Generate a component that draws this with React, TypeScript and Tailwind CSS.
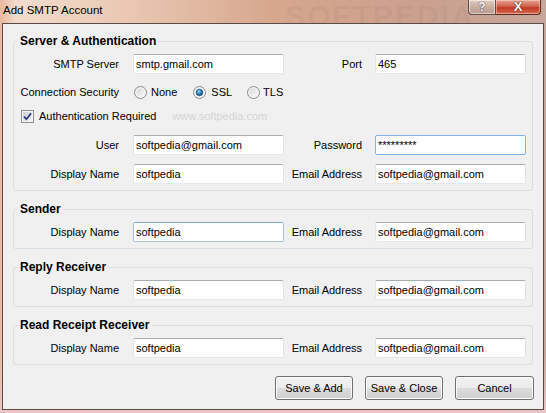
import { ReactNode } from 'react'

const inputBase =
  'h-[20px] w-[151px] bg-white border px-[2px] text-[11px] leading-[18px] text-black whitespace-nowrap overflow-hidden'

function TextBox({ value, state }: { value: string; state?: 'focus' | 'hover' }) {
  const border =
    state === 'focus'
      ? 'border-[#7eb4ea]'
      : state === 'hover'
        ? 'border-[#a9c2db] border-t-[#8aa9c8]'
        : 'border-[#e2e3ea] border-t-[#abadb3] border-b-[#e3e9ef]'
  return <div className={`${inputBase} ${border} rounded-[2px]`}>{value}</div>
}

function Label({ children, w }: { children: ReactNode; w: string }) {
  return <div className={`${w} shrink-0 text-right text-[11px] leading-[14px] text-black`}>{children}</div>
}

interface RowProps {
  label1: string
  value1: string
  label2: string
  value2: string
  state1?: 'focus' | 'hover'
  state2?: 'focus' | 'hover'
  className?: string
}

function FieldRow({ label1, value1, label2, value2, state1, state2, className = '' }: RowProps) {
  return (
    <div className={`flex items-center h-[20px] ${className}`}>
      <Label w="w-[105px]">{label1}</Label>
      <div className="ml-[14px]">
        <TextBox value={value1} state={state1} />
      </div>
      <Label w="w-[78px]">{label2}</Label>
      <div className="ml-[13px]">
        <TextBox value={value2} state={state2} />
      </div>
    </div>
  )
}

function Group({ title, children, className = '' }: { title: string; children: ReactNode; className?: string }) {
  return (
    <fieldset className={`border border-[#d5dfe5] rounded-[3px] p-0 m-0 ${className}`}>
      <legend className="ml-[4px] px-[2px] text-[12px] leading-[14px] font-bold text-black">{title}</legend>
      <div className="pt-[6px] pb-[6px]">{children}</div>
    </fieldset>
  )
}

function Radio({ checked }: { checked?: boolean }) {
  return (
    <svg width="13" height="13" viewBox="0 0 13 13" className="shrink-0">
      <defs>
        <linearGradient id="radioFill" x1="0" y1="0" x2="1" y2="1">
          <stop offset="0" stopColor="#d6d6d6" />
          <stop offset="1" stopColor="#fbfbfb" />
        </linearGradient>
        <radialGradient id="radioDot" cx="0.4" cy="0.35" r="0.7">
          <stop offset="0" stopColor="#8fd6ff" />
          <stop offset="0.5" stopColor="#2e86c7" />
          <stop offset="1" stopColor="#0b3e6e" />
        </radialGradient>
      </defs>
      <circle cx="6.5" cy="6.5" r="6" fill="#f4f4f4" stroke="#8b8b8b" />
      <circle cx="6.5" cy="6.5" r="4.2" fill="url(#radioFill)" />
      {checked && <circle cx="6.5" cy="6.5" r="3.3" fill="url(#radioDot)" stroke="#173f63" strokeWidth="0.6" />}
    </svg>
  )
}

function CheckBox() {
  return (
    <svg width="13" height="13" viewBox="0 0 13 13" className="shrink-0">
      <defs>
        <linearGradient id="cbFill" x1="0" y1="0" x2="1" y2="1">
          <stop offset="0" stopColor="#cbcfd5" />
          <stop offset="1" stopColor="#f7f7f7" />
        </linearGradient>
      </defs>
      <rect x="0.5" y="0.5" width="12" height="12" fill="#f4f4f4" stroke="#8e8f8f" />
      <rect x="2" y="2" width="9" height="9" fill="url(#cbFill)" />
      <path d="M3 6.6 L5.4 9.2 L10 3.4" stroke="#2a3b78" strokeWidth="1.7" fill="none" />
    </svg>
  )
}

function DialogButton({ children, w = 'w-[78px]' }: { children: ReactNode; w?: string }) {
  return (
    <div
      className={`${w} h-[24px] flex items-center justify-center rounded-[3px] border border-[#707070] bg-[linear-gradient(180deg,#f2f2f2_0%,#ebebeb_50%,#dddddd_51%,#cfcfcf_100%)] shadow-[inset_0_0_0_1px_#fcfcfc] text-[11px] text-black`}
    >
      {children}
    </div>
  )
}

export default function App() {
  return (
    <div className="w-[546px] h-[413px] flex flex-col overflow-hidden font-['Liberation_Sans',Arial,sans-serif] bg-[linear-gradient(90deg,#e9b9a0_0%,#f3dccd_3%,#e9c6b1_25%,#d6a78d_50%,#cba08e_75%,#c7a69b_100%)]">
      {/* title bar */}
      <div className="relative h-[23px] flex items-start shrink-0">
        <span className="absolute left-[285px] top-[-7px] text-[30px] font-bold tracking-[2px] text-[rgba(110,70,55,0.08)] select-none">
          SOFTPEDIA
        </span>
        <span className="relative pl-[3px] pt-[3px] text-[11.5px] leading-[14px] text-black">Add SMTP Account</span>
        <div className="relative ml-auto mr-[5px] flex">
          <div className="h-[15px] w-[28px] flex items-center justify-center rounded-bl-[4px] border border-t-0 border-[#5e4c45] bg-[linear-gradient(180deg,#e1cdc3_0%,#c9aea1_50%,#b99b8d_100%)] shadow-[inset_0_0_0_1px_rgba(255,255,255,0.5)]">
            <span className="text-[12px] leading-[12px] font-bold text-white [text-shadow:0_0_1px_#2e2a40,0_0_1px_#2e2a40]">?</span>
          </div>
          <div className="h-[15px] w-[45px] flex items-center justify-center rounded-br-[4px] border border-t-0 border-l-0 border-[#5e2a20] bg-[linear-gradient(180deg,#e7a493_0%,#d0614d_45%,#c23a25_55%,#d76a50_100%)] shadow-[inset_0_0_0_1px_rgba(255,220,210,0.5)]">
            <span className="text-[13px] leading-[12px] font-bold text-white [text-shadow:0_0_1px_#3a1a14,0_0_1px_#3a1a14]">X</span>
          </div>
        </div>
      </div>

      {/* client area */}
      <div className="flex-1 flex px-[2px] pb-[3px] bg-[linear-gradient(180deg,transparent_0%,transparent_85%,#e9c6c6_100%)]">
        <div className="relative flex-1 flex flex-col border border-[#5b4a45] bg-[#f0f0f0] pt-[10px] px-[10px]">
          <Group title="Server & Authentication">
            <div className="flex items-center h-[20px]">
              <Label w="w-[105px]">SMTP Server</Label>
              <div className="ml-[14px]">
                <TextBox value="smtp.gmail.com" />
              </div>
              <Label w="w-[78px]">Port</Label>
              <div className="ml-[13px]">
                <TextBox value="465" />
              </div>
            </div>
            <div className="flex items-center h-[20px] mt-[8px]">
              <Label w="w-[105px]">Connection Security</Label>
              <div className="ml-[15px] flex items-center text-[11px] leading-[14px] text-black">
                <Radio />
                <span className="ml-[4px]">None</span>
                <div className="ml-[16px]">
                  <Radio checked />
                </div>
                <span className="ml-[5px]">SSL</span>
                <div className="ml-[15px]">
                  <Radio />
                </div>
                <span className="ml-[3px]">TLS</span>
              </div>
            </div>
            <div className="flex items-center h-[20px] mt-[4px] pl-[7px]">
              <CheckBox />
              <span className="ml-[5px] text-[11px] leading-[14px] text-black">Authentication Required</span>
              <span className="ml-[16px] text-[11px] leading-[14px] text-[#d4d4d4] select-none">www.softpedia.com</span>
            </div>
            <FieldRow
              className="mt-[9px]"
              label1="User"
              value1="softpedia@gmail.com"
              label2="Password"
              value2="*********"
              state2="focus"
            />
            <FieldRow
              className="mt-[9px]"
              label1="Display Name"
              value1="softpedia"
              label2="Email Address"
              value2="softpedia@gmail.com"
            />
          </Group>

          <Group title="Sender" className="mt-[11px]">
            <FieldRow
              label1="Display Name"
              value1="softpedia"
              state1="hover"
              label2="Email Address"
              value2="softpedia@gmail.com"
            />
          </Group>

          <Group title="Reply Receiver" className="mt-[11px]">
            <FieldRow label1="Display Name" value1="softpedia" label2="Email Address" value2="softpedia@gmail.com" />
          </Group>

          <Group title="Read Receipt Receiver" className="mt-[11px]">
            <FieldRow label1="Display Name" value1="softpedia" label2="Email Address" value2="softpedia@gmail.com" />
          </Group>

          <div className="flex justify-end gap-[12px] mt-[11px] mr-[-1px]">
            <DialogButton>Save &amp; Add</DialogButton>
            <DialogButton>Save &amp; Close</DialogButton>
            <DialogButton w="w-[79px]">Cancel</DialogButton>
          </div>
        </div>
      </div>
    </div>
  )
}
